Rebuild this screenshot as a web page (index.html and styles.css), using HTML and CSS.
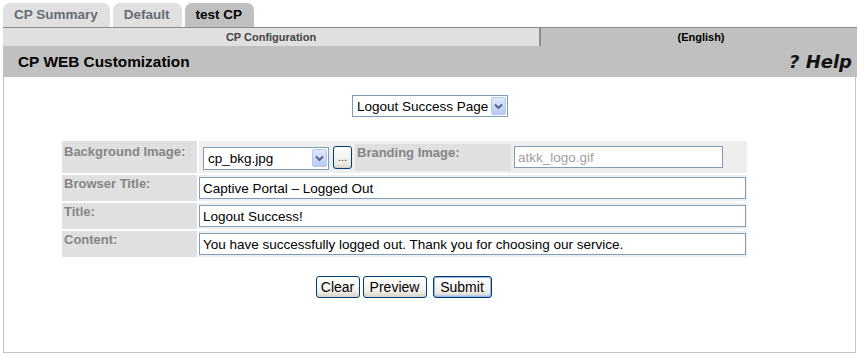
FILE: index.html
```html
<!DOCTYPE html>
<html lang="en">
<head>
    <meta charset="UTF-8">
    <title>CP WEB Customization</title>
    <link rel="stylesheet" href="styles.css">
</head>
<body>

<div class="page">
    <div class="tabs">
        <div class="tab">CP Summary</div>
        <div class="tab">Default</div>
        <div class="tab active">test CP</div>
    </div>

    <div class="subbar">
        <div class="sub-left">CP Configuration</div>
        <div class="sub-right">(English)</div>
    </div>

    <div class="titlebar">
        <h1>CP WEB Customization</h1>
        <span class="help">? Help</span>
    </div>

    <div class="content">
        <div class="page-select">
            <div class="select select-page">
                <span class="select-text">Logout Success Page</span>
                <span class="select-arrow"><svg width="9" height="7" viewBox="0 0 9 7"><path d="M1 1.5 L4.5 5 L8 1.5" fill="none" stroke="#4d6185" stroke-width="1.8"/></svg></span>
            </div>
        </div>

        <table class="form">
            <tr class="row-first">
                <td class="label">Background Image:</td>
                <td class="data">
                    <div class="image-row">
                        <div class="select select-bkg">
                            <span class="select-text">cp_bkg.jpg</span>
                            <span class="select-arrow"><svg width="9" height="7" viewBox="0 0 9 7"><path d="M1 1.5 L4.5 5 L8 1.5" fill="none" stroke="#4d6185" stroke-width="1.8"/></svg></span>
                        </div>
                        <button class="browse">...</button>
                        <div class="sublabel">Branding Image:</div>
                        <input class="field field-logo" type="text" value="atkk_logo.gif">
                    </div>
                </td>
            </tr>
            <tr>
                <td class="label">Browser Title:</td>
                <td class="data"><input class="field" type="text" value="Captive Portal – Logged Out"></td>
            </tr>
            <tr>
                <td class="label">Title:</td>
                <td class="data"><input class="field" type="text" value="Logout Success!"></td>
            </tr>
            <tr>
                <td class="label">Content:</td>
                <td class="data"><input class="field" type="text" value="You have successfully logged out. Thank you for choosing our service."></td>
            </tr>
        </table>

        <div class="actions">
            <button class="btn btn-clear">Clear</button>
            <button class="btn btn-mid">Preview</button>
            <button class="btn btn-default">Submit</button>
        </div>
    </div>
</div>

</body>
</html>
```

FILE: styles.css
```css
* {
    box-sizing: border-box;
}

body {
    margin: 0;
    font-family: "Liberation Sans", Arial, sans-serif;
    background: #fff;
}

.page {
    width: 854px;
    margin: 0 0 0 3px;
    padding-top: 3px;
}

/* tabs */
.tabs {
    display: flex;
    gap: 3px;
    height: 24px;
}
.tab {
    padding: 0 12px 0 11px;
    background: #e0e0e0;
    border-radius: 7px 7px 0 0;
    font-size: 13.5px;
    font-weight: bold;
    color: #666c72;
    line-height: 24px;
}
.tab.active {
    background: #c0c0c0;
    color: #000;
    padding: 0 12px 0 11px;
}

/* configuration strip */
.subbar {
    display: flex;
    height: 19px;
    border-top: 1px solid #8c8c8c;
    font-size: 11px;
    font-weight: bold;
    line-height: 18px;
    text-align: center;
}
.sub-left {
    width: 538px;
    background: #e0e0e0;
    color: #444;
    border-right: 2px solid #8c8c8c;
}
.sub-right {
    flex: 1;
    background: #c0c0c0;
    color: #000;
    padding-left: 4px;
}

.titlebar {
    display: flex;
    justify-content: space-between;
    align-items: center;
    height: 31px;
    background: #c0c0c0;
    padding: 0 5px 0 15px;
}
.titlebar h1 {
    margin: 0;
    font-size: 15.4px;
    font-weight: bold;
}
.help {
    font-family: "DejaVu Sans", Verdana, sans-serif;
    font-size: 18px;
    font-weight: bold;
    font-style: italic;
    color: #111;
}

/* main panel */
.content {
    height: 276px;
    border: 1px solid #c4c4c4;
    border-top: none;
    width: 853px;
}

.page-select {
    display: flex;
    justify-content: center;
    padding: 18px 0 0 1px;
}

.select {
    display: flex;
    align-items: center;
    justify-content: space-between;
    height: 22px;
    border: 1px solid #7f9db9;
    background: #fff;
    font-size: 13.5px;
    white-space: nowrap;
}
.select-text {
    padding-left: 4px;
}
.select-arrow {
    display: flex;
    align-items: center;
    justify-content: center;
    width: 15px;
    height: 18px;
    margin-right: 1px;
    border: 1px solid #b5c8ef;
    border-radius: 2px;
    background: linear-gradient(180deg, #dfe8fc, #b8cbf3);
}
.select-page {
    width: 156px;
}
.select-bkg {
    width: 126px;
    height: 23px;
    margin-top: 2px;
}

/* form table */
.form {
    margin: 22px 0 0 56px;
    width: 689px;
    border-collapse: separate;
    border-spacing: 2px;
}
.form td {
    padding: 0;
}
.label {
    width: 135px;
    height: 26px;
    background: #e0e0e0;
    vertical-align: top;
    padding: 1px 2px 0 2px !important;
    font-size: 13px;
    font-weight: bold;
    color: #858585;
    line-height: 16px;
}
.row-first .label {
    height: 32px;
    padding-top: 3px !important;
}
.data {
    background: #eeeeee;
    padding: 2px 1px 2px 0 !important;
}

.field {
    display: block;
    width: 100%;
    height: 22px;
    margin: 0;
    border: 1px solid #7f9db9;
    padding: 0 3px;
    font-family: "Liberation Sans", Arial, sans-serif;
    font-size: 13.5px;
    color: #000;
    background: #fff;
}

.image-row {
    display: flex;
    align-items: center;
    padding-left: 4px;
}
.browse {
    width: 19px;
    height: 23px;
    margin-left: 4px;
    padding: 0;
    border: 1px solid #003c74;
    border-radius: 3px;
    background: linear-gradient(180deg, #fff, #ecebe6 80%, #d6d0c5);
    font-size: 11px;
    line-height: 20px;
    color: #333;
}
.sublabel {
    width: 156px;
    height: 27px;
    margin-left: 3px;
    padding: 1px 2px;
    background: #e0e0e0;
    font-size: 13px;
    font-weight: bold;
    color: #858585;
    line-height: 16px;
}
.field-logo {
    width: 209px;
    margin-left: 3px;
    color: #a0a0a0;
}

/* buttons */
.actions {
    display: flex;
    justify-content: center;
    gap: 3px;
    width: 689px;
    margin: 17px 0 0 56px;
    padding-right: 2px;
}
.btn {
    height: 22px;
    padding: 0 4px;
    border: 1px solid #003c74;
    border-radius: 3px;
    background: linear-gradient(180deg, #fff, #f2f1ec 70%, #d8d2c6);
    font-family: "Liberation Sans", Arial, sans-serif;
    font-size: 14px;
    color: #000;
}
.btn-clear {
    width: 44px;
}
.btn-mid {
    width: 64px;
}
.btn-default {
    width: 59px;
    margin-left: 3px;
    box-shadow: inset 0 0 0 1px #98b4e8, inset 0 -1px 0 1px #b9cdf2;
}
```
